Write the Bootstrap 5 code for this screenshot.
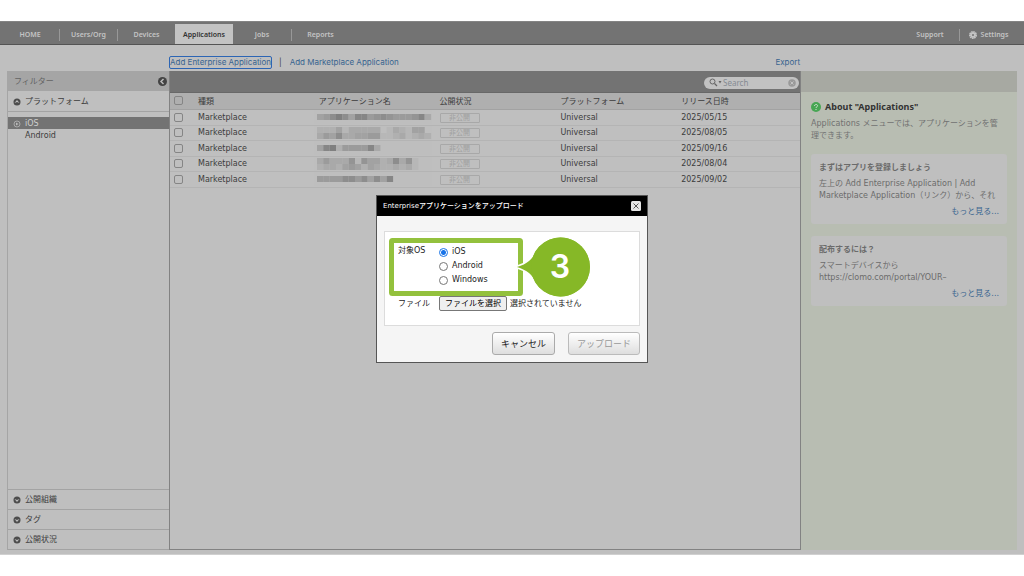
<!DOCTYPE html>
<html lang="ja">
<head>
<meta charset="utf-8">
<meta name="viewport" content="width=device-width, initial-scale=1">
<title>Applications</title>
<link href="https://cdn.jsdelivr.net/npm/bootstrap@5.3.0/dist/css/bootstrap.min.css" rel="stylesheet">
<style>
body{font-family:"DejaVu Sans","Noto Sans CJK JP",sans-serif;font-size:8px;line-height:12px;color:#3c3c3c;background:#fff;padding:21px 0}
.console{background:#bfbfbf;min-height:calc(100vh - 42px);border-bottom:1px solid #d0d0d0}
a{color:#38648f;text-decoration:none}
button,input{font-family:inherit}
.topbar{background:#737373;border-top:1px solid #848484;border-bottom:1px solid #545454;height:24px;font-family:"Noto Sans",sans-serif;font-size:7px;font-weight:600;padding:0 7px 0 1px}
.topbar a{color:#c4c4c4}
.tab-item{width:58px;height:12px;margin-top:7px;text-align:center}
.split{border-left:1px solid #989898}
.tab-item.active{background:#c3c3c3;height:20px;margin-top:2px;padding-top:5px}
.topbar .active a{color:#333}
.actions{height:26px;padding:8px 0 0 170px;font-family:Inter,sans-serif;line-height:11px;font-size:8px}
.actions .inner{width:calc(100% - 224px)}
.focused{outline:1px solid #2c65b4;border-radius:1px}
.panes{padding:0 0 4px 7px}
.filters{width:162px;flex:none;border-left:1px solid #a5a5a5;border-bottom:1px solid #a2a2a2}
.filter-head{background:#a5a5a5;height:20px;color:#636363;padding:1px 2px 0 6px}
.section-row{height:20px;padding:1px 0 0 5px;gap:4px}
.closed-row{border-top:1px solid #a3a3a3}
.rule{height:6px}
.picked{background:#737373;color:#cfcfcf}
.os-row{height:12px;padding:1px 0 0 5px;gap:4px}
.listing{border:1px solid #828282;border-top:0;min-width:0}
.listing-bar{background:#737373;height:22px;border-bottom:1px solid #686868}
.search-box{width:95px;height:12px;border-radius:6px;background:#c2c2c2;padding:0 3px 0 5px;margin:2px 1px 0 0}
.search-box input{width:60px;border:0;background:transparent;padding:0;font-size:8px;line-height:12px;height:12px;outline:0;font-family:"Noto Sans",sans-serif}
.search-box input::placeholder{color:#858b92;opacity:1}
.apps{table-layout:fixed;width:100%}
.apps th,.apps td{padding:1px 0 0 2px;vertical-align:middle;border-bottom:1px solid #b4b4b4;font-weight:400;line-height:12px}
.apps th{background:#afafaf;height:16px;border-color:#a2a2a2;padding-top:2px}
.apps td{height:16px}
.apps tr:nth-child(even) td{height:15px}
.apps .tick{width:26px;padding:0 0 0 4px}
.apps input{appearance:none;width:9px;height:9px;border:1px solid #858585;border-radius:2px;margin:0;display:block}
.apps td.masked{padding:0}
.apps svg{display:block;margin-left:-3px}
.state{display:block;width:40px;height:10px;border:1px solid #a8a8a8;border-radius:1px;color:#a0a0a0;font-size:7px;line-height:8px;text-align:center}
.help{width:216px;flex:none;background:#b8bdb2;margin-right:7px}
.help-bar{height:21px;background:#a7a9a2}
.help-body{padding:9px 10px 0;color:#717171}
.help h1{font-size:9px;line-height:12px;font-weight:700;color:#333;margin:0;font-family:"Noto Sans",sans-serif}
.help .intro{margin:5px 7px 12px 0}
.tip{background:#bfbfbf;border-radius:3px;padding:8px 8px 5px;margin-bottom:12px;min-height:70px;color:#6b6b6b}
.tip h2{font-size:8px;line-height:12px;font-weight:700;margin:0 0 4px}
.tip p{margin:0}
.tip .more{display:block;text-align:right;margin-top:4px}
.upload{position:fixed;left:50%;top:195px;transform:translateX(-50%);width:272px;background:#f5f5f5;border:1px solid #555;color:#222}
.upload-head{background:#000;color:#fff;height:20px;padding:0 6px;margin:0}
.upload-head h2{font:500 7px/12px "DejaVu Sans","Noto Sans CJK JP",sans-serif;margin:0}
.upload-head button{border:0;background:none;padding:0;line-height:0}
.upload-form{background:#fff;border:1px solid #dcdcdc;margin:15px 7px 6px;height:95px;padding:13px 13px 0}
.upload-form .name{width:41px}
.choice{height:14px;gap:4px}
.choice input{appearance:none;width:9px;height:9px;border:1px solid #777;border-radius:50%;margin:0}
.choice input:checked{border-color:#1974e8;background:radial-gradient(circle,#1974e8 2px,#fff 3px)}
.file-row{margin-top:9px}
.pick{height:15px;border:1px solid #777;border-radius:2px;background:#efefef;padding:0 5px;font-size:8px;line-height:12px;color:#000;margin-right:3px}
.dialog-actions{padding:0 7px 7px;gap:13px}
.act{height:23px;width:63px;border:1px solid #aaa;border-radius:3px;background:linear-gradient(#fff,#dedede);font-size:9px;line-height:12px;padding:0;color:#222}
.act.wide{width:72px}
.act:disabled{color:#999;border-color:#bbb}
.marker{position:absolute;left:12px;top:40px;pointer-events:none}
</style>
</head>
<body>
<div class="console d-flex flex-column">
  <nav class="topbar d-flex">
    <div class="tab-item"><a href="#">HOME</a></div>
    <div class="tab-item split"><a href="#">Users/Org</a></div>
    <div class="tab-item split"><a href="#">Devices</a></div>
    <div class="tab-item active"><a href="#">Applications</a></div>
    <div class="tab-item"><a href="#">Jobs</a></div>
    <div class="tab-item split"><a href="#">Reports</a></div>
    <div class="tab-item ms-auto"><a href="#">Support</a></div>
    <div class="tab-item split"><a href="#" class="d-flex align-items-center justify-content-center"><svg class="me-1" width="8" height="8" viewBox="0 0 16 16"><circle cx="8" cy="8" r="6" fill="none" stroke="#c4c4c4" stroke-width="4" stroke-dasharray="3 1"/><circle cx="8" cy="8" r="5.500" fill="#c4c4c4"/><path d="M8 6v4M6 8h4" stroke="#737373" stroke-width="2"/></svg>Settings</a></div>
  </nav>
  <div class="actions d-flex align-items-center">
    <div class="inner d-flex">
      <a href="#" class="focused">Add Enterprise Application</a><span class="px-1 mx-1 text-center">|</span><a href="#">Add Marketplace Application</a><a href="#" class="ms-auto">Export</a>
    </div>
  </div>
  <main class="panes d-flex flex-grow-1">
    <aside class="filters d-flex flex-column">
      <div class="filter-head d-flex align-items-center justify-content-between">フィルター<svg width="9" height="9" viewBox="0 0 18 18"><circle cx="9" cy="9" r="9" fill="#444"/><path d="M11 4 6 9l5 5" fill="none" stroke="#bbb" stroke-width="3"/></svg></div>
      <div class="section-row d-flex align-items-center"><svg width="8" height="8" viewBox="0 0 16 16"><circle cx="8" cy="8" r="7" fill="#4d4d4d"/><path d="m3 10 5-6 5 6-5-2z" fill="#bfbfbf"/></svg>プラットフォーム</div>
      <div class="closed-row rule"></div>
      <div class="os-row picked d-flex align-items-center"><svg width="8" height="8" viewBox="0 0 16 16"><circle cx="8" cy="8" r="6" fill="none" stroke="#bbb" stroke-width="1.500"/><path d="m6 5 5 3-5 3z" fill="#bbb"/></svg>iOS</div>
      <div class="os-row d-flex align-items-center"><svg width="8" height="8"></svg>Android</div>
      <div class="section-row closed-row d-flex align-items-center mt-auto"><svg width="8" height="8" viewBox="0 0 16 16"><circle cx="8" cy="8" r="7" fill="#4d4d4d"/><path d="m3 6 5 6 5-6-5 2z" fill="#bfbfbf"/></svg>公開組織</div>
      <div class="section-row closed-row d-flex align-items-center"><svg width="8" height="8" viewBox="0 0 16 16"><circle cx="8" cy="8" r="7" fill="#4d4d4d"/><path d="m3 6 5 6 5-6-5 2z" fill="#bfbfbf"/></svg>タグ</div>
      <div class="section-row closed-row d-flex align-items-center"><svg width="8" height="8" viewBox="0 0 16 16"><circle cx="8" cy="8" r="7" fill="#4d4d4d"/><path d="m3 6 5 6 5-6-5 2z" fill="#bfbfbf"/></svg>公開状況</div>
    </aside>
    <section class="listing flex-grow-1">
      <div class="listing-bar d-flex align-items-center justify-content-end">
        <label class="search-box d-flex align-items-center"><svg width="14" height="9" viewBox="0 0 28 18"><circle cx="7" cy="7" r="5" fill="none" stroke="#666" stroke-width="2"/><path d="m11 11 5 5" stroke="#666" stroke-width="2.500"/><path d="M19 6h6l-3 5z" fill="#666"/></svg><input type="text" placeholder="Search" aria-label="Search"><svg class="ms-auto" width="8" height="8" viewBox="0 0 16 16"><circle cx="8" cy="8" r="7.500" fill="#999"/><path d="m5 5 6 6m0-6-6 6" stroke="#c2c2c2" stroke-width="2"/></svg></label>
      </div>
      <table class="apps">
        <thead><tr><th class="tick"><input type="checkbox" aria-label="すべて選択"></th><th>種類</th><th>アプリケーション名</th><th>公開状況</th><th>プラットフォーム</th><th>リリース日時</th></tr></thead>
        <tbody id="rows"></tbody>
      </table>
    </section>
    <aside class="help">
      <div class="help-bar"></div>
      <div class="help-body">
        <div class="d-flex align-items-center"><svg class="me-1" width="10" height="10" viewBox="0 0 20 20"><circle cx="10" cy="10" r="10" fill="#47a653"/><path d="M7 8c0-4 6-4 6-.5C13 10 10 9.500 10 12m0 2v2" fill="none" stroke="#d4e3d2" stroke-width="2"/></svg><h1>About "Applications"</h1></div>
        <p class="intro">Applications メニューでは、アプリケーションを管理できます。</p>
        <div class="tip"><h2>まずはアプリを登録しましょう</h2><p>左上の Add Enterprise Application | Add Marketplace Application（リンク）から、それ</p><a class="more" href="#">もっと見る...</a></div>
        <div class="tip"><h2>配布するには？</h2><p>スマートデバイスから<br>https://clomo.com/portal/YOUR–</p><a class="more" href="#">もっと見る...</a></div>
      </div>
    </aside>
  </main>
</div>

<div class="upload" role="dialog" aria-labelledby="uploadTitle">
  <div class="upload-head d-flex align-items-center justify-content-between"><h2 id="uploadTitle">Enterpriseアプリケーションをアップロード</h2><button type="button" aria-label="閉じる"><svg width="10" height="10" viewBox="0 0 20 20"><rect width="20" height="20" rx="3" fill="#e6e6e6"/><path d="m5 5 10 10m0-10L5 15" stroke="#555" stroke-width="2"/></svg></button></div>
  <div class="upload-form">
    <div class="d-flex" role="radiogroup" aria-labelledby="osName">
      <span class="name" id="osName">対象OS</span>
      <div>
        <label class="choice d-flex align-items-center"><input type="radio" name="os" checked>iOS</label>
        <label class="choice d-flex align-items-center"><input type="radio" name="os">Android</label>
        <label class="choice d-flex align-items-center"><input type="radio" name="os">Windows</label>
      </div>
    </div>
    <div class="file-row d-flex align-items-center">
      <label class="name" for="file">ファイル</label>
      <input type="file" id="file" class="d-none"><button type="button" class="pick" onclick="document.getElementById('file').click()">ファイルを選択</button><span>選択されていません</span>
    </div>
  </div>
  <div class="dialog-actions d-flex justify-content-end"><button type="button" class="act">キャンセル</button><button type="button" class="act wide" disabled>アップロード</button></div>
  <svg class="marker" width="204" height="62" viewBox="0 0 204 62"><rect x="2.500" y="4.500" width="129" height="53" rx="1" fill="none" stroke="#93c13d" stroke-width="5"/><path d="M128 31c10-3 16-8 18-15a29.500 29.500 0 1 1 0 30c-2-7-8-12-18-15z" fill="#86b827" stroke="#fff" stroke-width="3" paint-order="stroke"/><path d="M201 31a29.500 29.500 0 1 1-59 0 29.500 29.500 0 0 1 59 0" fill="#86b827"/><text x="171" y="42" text-anchor="middle" font-family="Inter" font-weight="600" font-size="32" fill="#fff">3</text></svg>
</div>

<script>
// Masked application names: two bands of shade levels, 0 = clear, 9 = darkest
const apps = [
  ["2025/05/15", "457974885676555683", ""],
  ["2025/08/05", "222413333301321440", "354733445511231232"],
  ["2025/09/16", "4892555583", ""],
  ["2025/08/04", "3533361644237361", "2332454243223231"],
  ["2025/09/02", "555577574748", ""]
];
const band = (s, y) => [...s].map((n, i) => {
  const g = 190 - n * 7;
  return n > 0 ? `<rect x="${(3 + i * 6.333).toFixed(1)}" y="${y}" width="6.400" height="6" fill="rgb(${g},${g},${g})"/>` : "";
}).join("");
document.getElementById("rows").innerHTML = apps.map(([day, a, b]) => `<tr>
  <td class="tick"><input type="checkbox" aria-label="${day}"></td><td>Marketplace</td>
  <td class="masked"><svg width="118" height="14" viewBox="0 0 118 14"><rect width="118" height="14" fill="#bebebe"/>${b ? band(a, 1) + band(b, 7) : band(a, 4)}</svg></td>
  <td><span class="state">非公開</span></td><td>Universal</td><td>${day}</td></tr>`).join("");
</script>
<script src="https://cdn.jsdelivr.net/npm/bootstrap@5.3.0/dist/js/bootstrap.bundle.min.js"></script>
</body>
</html>
